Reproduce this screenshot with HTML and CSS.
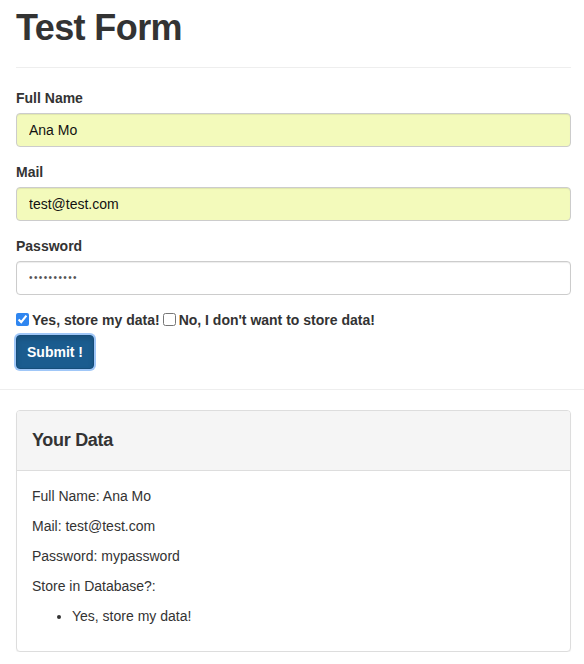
FILE: index.html
```html
<!DOCTYPE html>
<html>
<head>
<meta charset="utf-8">
<title>Test Form</title>
<link rel="stylesheet" href="styles.css">
</head>
<body>
<div class="container">
  <h1 class="title">Test Form</h1>
  <hr class="rule">
  <form class="form">
    <div class="form-group">
      <label class="label" for="name">Full Name</label>
      <input class="control autofill" id="name" type="text" value="Ana Mo">
    </div>
    <div class="form-group">
      <label class="label" for="mail">Mail</label>
      <input class="control autofill" id="mail" type="text" value="test@test.com">
    </div>
    <div class="form-group">
      <label class="label" for="pw">Password</label>
      <input class="control secret" id="pw" type="password" value="mypassword">
    </div>
    <div class="checks">
      <label class="check"><input type="checkbox" class="box" checked> Yes, store my data!</label>
      <label class="check"><input type="checkbox" class="box"> No, I don't want to store data!</label>
    </div>
    <button type="button" class="btn">Submit !</button>
  </form>
</div>
<hr class="rule full">
<div class="container">
  <div class="panel">
    <div class="panel-heading">
      <h3 class="panel-title">Your Data</h3>
    </div>
    <div class="panel-body">
      <p class="line">Full Name: Ana Mo</p>
      <p class="line">Mail: test@test.com</p>
      <p class="line">Password: mypassword</p>
      <p class="line">Store in Database?:</p>
      <ul class="list">
        <li>Yes, store my data!</li>
      </ul>
    </div>
  </div>
</div>
</body>
</html>
```

FILE: styles.css
```css
* { box-sizing: border-box; }
html, body { margin: 0; padding: 0; }
body {
  font-family: "Liberation Sans", Arial, sans-serif;
  font-size: 14px;
  line-height: 20px;
  color: #333;
  background: #fff;
}
.container {
  padding: 0 13px 0 16px;
}
.title {
  margin: 8px 0 0;
  font-size: 36px;
  line-height: 39.6px;
  font-weight: bold;
  letter-spacing: -0.6px;
  color: #333;
}
.rule {
  border: 0;
  border-top: 1px solid #eee;
  margin: 19px 0 20px;
  height: 0;
}
.rule.full {
  margin: 20px 0 20px;
}
.form-group {
  margin-bottom: 15px;
}
.label {
  display: block;
  font-weight: bold;
  margin-bottom: 5px;
}
.control {
  display: block;
  width: 100%;
  height: 34px;
  padding: 6px 12px;
  font-family: inherit;
  font-size: 14px;
  line-height: 20px;
  color: #111;
  background: #fff;
  border: 1px solid #ccc;
  border-radius: 4px;
  box-shadow: inset 0 1px 1px rgba(0,0,0,.075);
  outline: none;
}
.control.secret {
  font-size: 10px;
  letter-spacing: 1.4px;
  color: #555;
}
.control.autofill {
  background: #f3fabb;
}
.checks {
  display: flex;
  gap: 3px;
  height: 20px;
  align-items: center;
}
.check {
  display: flex;
  align-items: center;
  font-weight: bold;
  gap: 3px;
}
.box {
  width: 13px;
  height: 13px;
  margin: 0;
  accent-color: #2f86f0;
}
.btn {
  margin-top: 5px;
  display: inline-block;
  height: 34px;
  padding: 6px 10px;
  font-family: inherit;
  font-size: 14px;
  font-weight: bold;
  line-height: 20px;
  color: #fff;
  background: #1b5c8f;
  border: 1px solid #164d79;
  border-radius: 4px;
  box-shadow: 0 0 0 2px rgba(120,175,245,.7), inset 0 3px 5px rgba(0,0,0,.125);
}
.panel {
  border: 1px solid #ddd;
  border-radius: 4px;
  box-shadow: 0 1px 1px rgba(0,0,0,.05);
  background: #fff;
}
.panel-heading {
  background: #f5f5f5;
  border-bottom: 1px solid #ddd;
  border-radius: 3px 3px 0 0;
  padding: 20px 15px;
}
.panel-title {
  margin: 0;
  font-size: 18px;
  line-height: 19px;
  font-weight: bold;
  letter-spacing: -0.3px;
  color: #333;
}
.panel-body {
  padding: 15px;
}
.line {
  margin: 0 0 10px;
}
.list {
  margin: 0 0 10px;
  padding-left: 40px;
}
```
